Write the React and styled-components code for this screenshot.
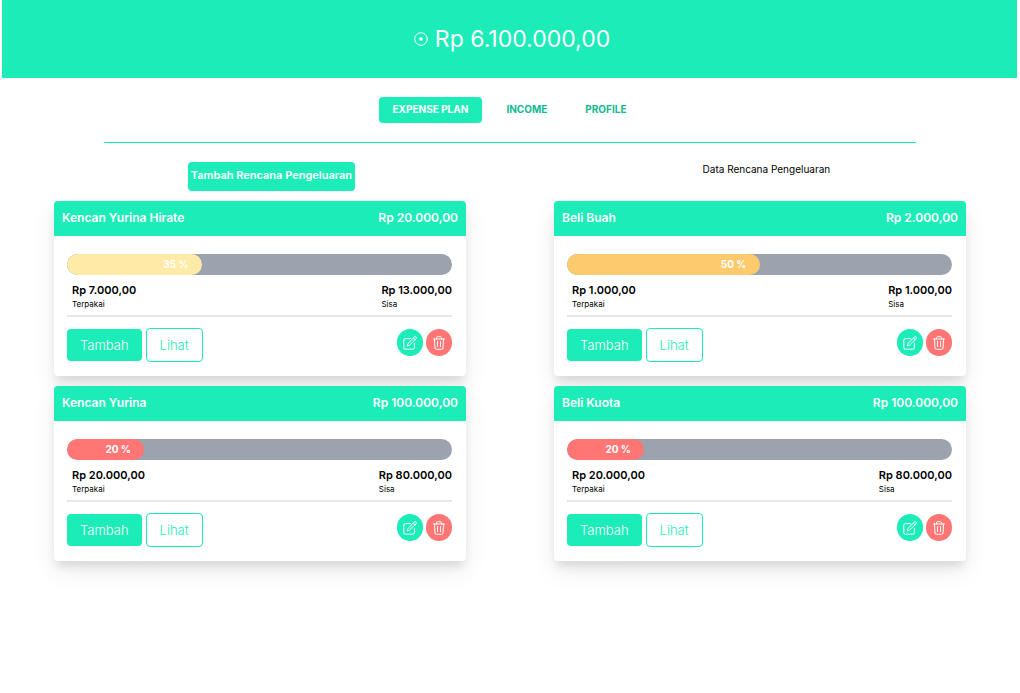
import React from "react";
import styled, { createGlobalStyle } from "styled-components";

const mint = "#1cecb8";
const coral = "#ff7675";

const GlobalStyle = createGlobalStyle`
  *, *::before, *::after { box-sizing: border-box; }
  body {
    margin: 0;
    background: #fff;
    color: #000;
    font-family: Inter, "Liberation Sans", sans-serif;
    font-size: 10px;
    line-height: 16px;
  }
  button { font: inherit; border: 0; cursor: pointer; }
  p, h1, h2 { margin: 0; }
`;

const Page = styled.div`
  min-height: 100vh;
  padding: 0 3px 48px 2px;
`;

const Banner = styled.header`
  display: flex;
  align-items: center;
  justify-content: center;
  gap: 7px;
  height: 78px;
  padding: 0 0 1px 5px;
  background: ${mint};
  color: #fff;
`;

const Balance = styled.h1`
  font-size: 23px;
  line-height: 32px;
  font-weight: 400;
`;

const Nav = styled.nav`
  display: flex;
  justify-content: center;
  gap: 10px;
  padding: 19px 0;
`;

const Tab = styled.a`
  padding: 4px 14px 6px;
  border-radius: 4px;
  background: ${(p) => (p.$active ? mint : "transparent")};
  color: ${(p) => (p.$active ? "#fff" : "#10b990")};
  font-weight: 700;
  text-decoration: none;
`;

const Rule = styled.hr`
  width: 80%;
  height: 1px;
  margin: 0 auto;
  border: 0;
  background: ${mint};
`;

const Toolbar = styled.div`
  display: flex;
  justify-content: space-around;
  align-items: flex-start;
  padding: 19px 13px 10px 12px;
`;

const AddPlan = styled.button`
  padding: 5px 3px 8px;
  border-radius: 4px;
  background: ${mint};
  color: #fff;
  font-size: 11px;
  font-weight: 600;
`;

const Heading = styled.h2`
  font-size: 10px;
  line-height: 15px;
  font-weight: 400;
`;

const Grid = styled.main`
  display: grid;
  grid-template-columns: 1fr 1fr;
  gap: 10px 88px;
  padding: 0 51px 0 52px;
`;

const Card = styled.article`
  border-radius: 4px;
  background: #fff;
  box-shadow: 0 7px 10px -2px rgba(0, 0, 0, 0.1), 0 10px 25px 0 rgba(0, 0, 0, 0.08);
`;

const CardHead = styled.header`
  display: flex;
  justify-content: space-between;
  padding: 9px 8px 10px;
  border-radius: 4px 4px 0 0;
  background: ${mint};
  color: #fff;
  font-size: 12px;
  font-weight: 600;
`;

const CardTitle = styled.h2`
  font-size: 12px;
  font-weight: 600;
`;

const CardBody = styled.div`
  padding: 18px 14px 14px 13px;
`;

const Track = styled.div`
  overflow: hidden;
  border-radius: 11px;
  background: #9ca3af;
`;

const Fill = styled.div`
  height: 21px;
  padding-right: 13px;
  border-radius: 11px;
  background: ${(p) => p.$tone};
  color: #fff;
  font-weight: 700;
  line-height: 21px;
  text-align: right;
`;

const Amounts = styled.div`
  display: flex;
  justify-content: space-between;
  padding: 8px 0 5px 5px;
  border-bottom: 2px solid #e5e7eb;
`;

const Amount = styled.p`
  font-size: 11px;
  font-weight: 600;
  line-height: 15px;
`;

const Caption = styled.p`
  font-size: 8px;
  line-height: 12px;
`;

const Actions = styled.div`
  display: flex;
  justify-content: space-between;
  align-items: flex-start;
  padding-top: 11px;
`;

const Group = styled.div`
  display: flex;
  align-items: center;
  gap: ${(p) => p.$gap};
  padding-top: ${(p) => p.$top || 0};
`;

const Action = styled.button`
  padding: 8px 13px;
  border: ${(p) => (p.$outline ? `1px solid ${mint}` : "0")};
  border-radius: 4px;
  background: ${(p) => (p.$outline ? "#fff" : mint)};
  color: ${(p) => (p.$outline ? mint : "#fff")};
  font-size: 13px;
  font-weight: 300;
`;

const IconButton = styled.button`
  display: grid;
  place-items: center;
  width: 26px;
  height: 27px;
  padding: 0;
  border-radius: 13px;
  background: ${(p) => p.$tone};
  color: #fff;
`;

const Icon = ({ size = 14, children }) => (
  <svg
    width={size}
    height={size}
    viewBox="0 0 14 14"
    fill="none"
    stroke="currentColor"
    strokeLinecap="round"
    strokeLinejoin="round"
    aria-hidden="true"
  >
    {children}
  </svg>
);

const CoinIcon = () => (
  <Icon>
    <circle cx="7" cy="7" r="6.3" strokeWidth="1" />
    <circle cx="7" cy="7" r="1.8" fill="currentColor" stroke="none" />
  </Icon>
);

const EditIcon = () => (
  <Icon>
    <path d="M7.4 2.6H2.3A1.5 1.5 0 0 0 .8 4.1v7.6a1.5 1.5 0 0 0 1.5 1.5h7.6a1.5 1.5 0 0 0 1.5-1.5V7.2" strokeWidth="1" />
    <path d="M4.4 9.6l.6-2.3L11.4 1a1.2 1.2 0 0 1 1.7 1.7L6.7 9z M10.4 2l1.7 1.7" strokeWidth="1" />
  </Icon>
);

const TrashIcon = () => (
  <Icon>
    <path d="M1.5 3h11M4.5 3V1.8A1.1 1.1 0 0 1 5.6.7h2.8a1.1 1.1 0 0 1 1.1 1.1V3M2.5 3l.5 9a1.4 1.4 0 0 0 1.4 1.3h5.2A1.4 1.4 0 0 0 11 12l.5-9M5.5 5.4v5.2M8.5 5.4v5.2" strokeWidth="1" />
  </Icon>
);

const plans = [
  { name: "Kencan Yurina Hirate", total: "Rp 20.000,00", percent: 35, used: "Rp 7.000,00", left: "Rp 13.000,00" },
  { name: "Beli Buah", total: "Rp 2.000,00", percent: 50, used: "Rp 1.000,00", left: "Rp 1.000,00" },
  { name: "Kencan Yurina", total: "Rp 100.000,00", percent: 20, used: "Rp 20.000,00", left: "Rp 80.000,00" },
  { name: "Beli Kuota", total: "Rp 100.000,00", percent: 20, used: "Rp 20.000,00", left: "Rp 80.000,00" },
];

const toneFor = (percent) => (percent >= 50 ? "#fdcb6e" : percent >= 30 ? "#ffeaa7" : coral);

const PlanCard = ({ plan }) => (
  <Card>
    <CardHead>
      <CardTitle>{plan.name}</CardTitle>
      <span>{plan.total}</span>
    </CardHead>
    <CardBody>
      <Track>
        <Fill $tone={toneFor(plan.percent)} style={{ width: `${plan.percent}%` }}>
          {plan.percent} %
        </Fill>
      </Track>
      <Amounts>
        <div>
          <Amount>{plan.used}</Amount>
          <Caption>Terpakai</Caption>
        </div>
        <div>
          <Amount>{plan.left}</Amount>
          <Caption>Sisa</Caption>
        </div>
      </Amounts>
      <Actions>
        <Group $gap="4px">
          <Action type="button">Tambah</Action>
          <Action type="button" $outline>Lihat</Action>
        </Group>
        <Group $gap="3px" $top="1px">
          <IconButton type="button" $tone={mint} aria-label="Edit"><EditIcon /></IconButton>
          <IconButton type="button" $tone={coral} aria-label="Hapus"><TrashIcon /></IconButton>
        </Group>
      </Actions>
    </CardBody>
  </Card>
);

export default function App() {
  return (
    <Page>
      <GlobalStyle />
      <Banner>
        <CoinIcon />
        <Balance>Rp 6.100.000,00</Balance>
      </Banner>
      <Nav>
        <Tab href="#expense" $active>EXPENSE PLAN</Tab>
        <Tab href="#income">INCOME</Tab>
        <Tab href="#profile">PROFILE</Tab>
      </Nav>
      <Rule />
      <Toolbar>
        <AddPlan type="button">Tambah Rencana Pengeluaran</AddPlan>
        <Heading>Data Rencana Pengeluaran</Heading>
      </Toolbar>
      <Grid>
        {plans.map((plan) => (
          <PlanCard key={plan.name} plan={plan} />
        ))}
      </Grid>
    </Page>
  );
}
